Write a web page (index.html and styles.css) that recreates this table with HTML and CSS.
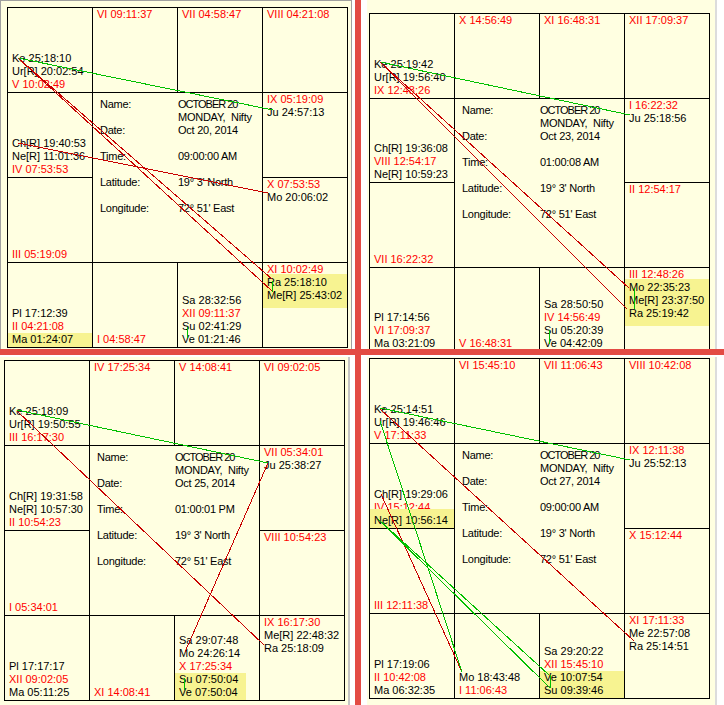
FILE: index.html
```html
<!DOCTYPE html>
<html>
<head>
<meta charset="utf-8">
<title>Charts</title>
<link rel="stylesheet" href="styles.css">
</head>
<body>
<div class="screen">

  <!-- Chart 1 -->
  <div class="quad q1">
    <div class="panel p1">
      <div class="chart">
        <div class="cell bot"><div>Ke 25:18:10</div><div>Ur[R] 20:02:54</div><div class="hs">V 10:02:49</div></div>
        <div class="cell top"><div class="hs">VI 09:11:37</div></div>
        <div class="cell top"><div class="hs">VII 04:58:47</div></div>
        <div class="cell top"><div class="hs">VIII 04:21:08</div></div>
        <div class="cell bot"><div>Ch[R] 19:40:53</div><div>Ne[R] 11:01:36</div><div class="hs">IV 07:53:53</div></div>
        <div class="cell center">
          <div>Name:</div><div><div class="month">OCTOBER 20</div><div class="day">MONDAY,  Nifty</div></div>
          <div>Date:</div><div>Oct 20, 2014</div>
          <div>Time:</div><div>09:00:00 AM</div>
          <div>Latitude:</div><div>19° 3' North</div>
          <div>Longitude:</div><div>72° 51' East</div>
        </div>
        <div class="cell top"><div class="hs">IX 05:19:09</div><div>Ju 24:57:13</div></div>
        <div class="cell bot"><div class="hs">III 05:19:09</div></div>
        <div class="cell top"><div class="hs">X 07:53:53</div><div>Mo 20:06:02</div></div>
        <div class="cell bot"><div>Pl 17:12:39</div><div class="hs">II 04:21:08</div><div class="hl hl-b"><div>Ma 01:24:07</div></div></div>
        <div class="cell bot"><div class="hs">I 04:58:47</div></div>
        <div class="cell bot"><div>Sa 28:32:56</div><div class="hs">XII 09:11:37</div><div>Su 02:41:29</div><div>Ve 01:21:46</div></div>
        <div class="cell top"><div class="hs">XI 10:02:49</div><div class="hl hl-t"><div>Ra 25:18:10</div><div>Me[R] 25:43:02</div></div></div>
        <svg class="aspects" width="341" height="341" viewBox="0 0 341 341">
          <line class="g" x1="11" y1="51" x2="266" y2="103"/>
          <line class="rd" x1="11" y1="51" x2="265" y2="272"/>
          <line class="rd" x1="12" y1="52" x2="265" y2="284"/>
          <line class="g" x1="265" y1="274" x2="265" y2="285"/>
          <line class="rd" x1="11" y1="136" x2="261" y2="186"/>
          <line class="g" x1="180" y1="320" x2="180" y2="331"/>
        </svg>
      </div>
    </div>
  </div>

  <div class="vbar"></div>

  <!-- Chart 2 -->
  <div class="quad q2">
    <div class="panel p2">
      <div class="chart chart-clip">
        <div class="cell bot"><div>Ke 25:19:42</div><div>Ur[R] 19:56:40</div><div class="hs">IX 12:48:26</div></div>
        <div class="cell top"><div class="hs">X 14:56:49</div></div>
        <div class="cell top"><div class="hs">XI 16:48:31</div></div>
        <div class="cell top"><div class="hs">XII 17:09:37</div></div>
        <div class="cell bot"><div>Ch[R] 19:36:08</div><div class="hs">VIII 12:54:17</div><div>Ne[R] 10:59:23</div></div>
        <div class="cell center">
          <div>Name:</div><div><div class="month">OCTOBER 20</div><div class="day">MONDAY,  Nifty</div></div>
          <div>Date:</div><div>Oct 23, 2014</div>
          <div>Time:</div><div>01:00:08 AM</div>
          <div>Latitude:</div><div>19° 3' North</div>
          <div>Longitude:</div><div>72° 51' East</div>
        </div>
        <div class="cell top"><div class="hs">I 16:22:32</div><div>Ju 25:18:56</div></div>
        <div class="cell bot"><div class="hs">VII 16:22:32</div></div>
        <div class="cell top"><div class="hs">II 12:54:17</div></div>
        <div class="cell bot last"><div>Pl 17:14:56</div><div class="hs">VI 17:09:37</div><div>Ma 03:21:09</div></div>
        <div class="cell bot last"><div class="hs">V 16:48:31</div></div>
        <div class="cell bot last"><div>Sa 28:50:50</div><div class="hs">IV 14:56:49</div><div>Su 05:20:39</div><div>Ve 04:42:09</div></div>
        <div class="cell top last"><div class="hs">III 12:48:26</div><div class="hl hl-t"><div>Mo 22:35:23</div><div>Me[R] 23:37:50</div><div>Ra 25:19:42</div></div></div>
        <svg class="aspects" width="341" height="341" viewBox="0 0 341 341">
          <line class="g" x1="11" y1="49" x2="261" y2="102"/>
          <line class="rd" x1="11" y1="49" x2="260" y2="275"/>
          <line class="rd" x1="12" y1="50" x2="258" y2="296"/>
          <line class="g" x1="265" y1="275" x2="265" y2="296"/>
          <line class="g" x1="180" y1="317" x2="180" y2="331"/>
        </svg>
      </div>
    </div>
  </div>

  <div class="hbar"></div>

  <!-- Chart 3 -->
  <div class="quad q3">
    <div class="panel p3">
      <div class="chart">
        <div class="cell bot"><div>Ke 25:18:09</div><div>Ur[R] 19:50:55</div><div class="hs">III 16:17:30</div></div>
        <div class="cell top"><div class="hs">IV 17:25:34</div></div>
        <div class="cell top"><div class="hs">V 14:08:41</div></div>
        <div class="cell top"><div class="hs">VI 09:02:05</div></div>
        <div class="cell bot"><div>Ch[R] 19:31:58</div><div>Ne[R] 10:57:30</div><div class="hs">II 10:54:23</div></div>
        <div class="cell center">
          <div>Name:</div><div><div class="month">OCTOBER 20</div><div class="day">MONDAY,  Nifty</div></div>
          <div>Date:</div><div>Oct 25, 2014</div>
          <div>Time:</div><div>01:00:01 PM</div>
          <div>Latitude:</div><div>19° 3' North</div>
          <div>Longitude:</div><div>72° 51' East</div>
        </div>
        <div class="cell top"><div class="hs">VII 05:34:01</div><div>Ju 25:38:27</div></div>
        <div class="cell bot"><div class="hs">I 05:34:01</div></div>
        <div class="cell top"><div class="hs">VIII 10:54:23</div></div>
        <div class="cell bot"><div>Pl 17:17:17</div><div class="hs">XII 09:02:05</div><div>Ma 05:11:25</div></div>
        <div class="cell bot"><div class="hs">XI 14:08:41</div></div>
        <div class="cell bot"><div>Sa 29:07:48</div><div>Mo 24:26:14</div><div class="hs">X 17:25:34</div><div class="hl hl-b hl-short"><div>Su 07:50:04</div><div>Ve 07:50:04</div></div></div>
        <div class="cell top"><div class="hs">IX 16:17:30</div><div>Me[R] 22:48:32</div><div>Ra 25:18:09</div></div>
        <svg class="aspects" width="341" height="341" viewBox="0 0 341 341">
          <line class="g" x1="13" y1="50" x2="264" y2="103"/>
          <line class="rd" x1="13" y1="51" x2="260" y2="285"/>
          <line class="rd" x1="264" y1="103" x2="181" y2="292"/>
          <line class="g" x1="180" y1="318" x2="180" y2="330"/>
        </svg>
      </div>
    </div>
  </div>

  <!-- Chart 4 -->
  <div class="quad q4">
    <div class="panel p4">
      <div class="chart">
        <div class="cell bot"><div>Ke 25:14:51</div><div>Ur[R] 19:46:46</div><div class="hs">V 17:11:33</div></div>
        <div class="cell top"><div class="hs">VI 15:45:10</div></div>
        <div class="cell top"><div class="hs">VII 11:06:43</div></div>
        <div class="cell top"><div class="hs">VIII 10:42:08</div></div>
        <div class="cell bot"><div>Ch[R] 19:29:06</div><div class="hs">IV 15:12:44</div><div class="hl hl-b hl-up"><div>Ne[R] 10:56:14</div></div></div>
        <div class="cell center">
          <div>Name:</div><div><div class="month">OCTOBER 20</div><div class="day">MONDAY,  Nifty</div></div>
          <div>Date:</div><div>Oct 27, 2014</div>
          <div>Time:</div><div>09:00:00 AM</div>
          <div>Latitude:</div><div>19° 3' North</div>
          <div>Longitude:</div><div>72° 51' East</div>
        </div>
        <div class="cell top"><div class="hs">IX 12:11:38</div><div>Ju 25:52:13</div></div>
        <div class="cell bot"><div class="hs">III 12:11:38</div></div>
        <div class="cell top"><div class="hs">X 15:12:44</div></div>
        <div class="cell bot"><div>Pl 17:19:06</div><div class="hs">II 10:42:08</div><div>Ma 06:32:35</div></div>
        <div class="cell bot"><div>Mo 18:43:48</div><div class="hs">I 11:06:43</div></div>
        <div class="cell bot"><div>Sa 29:20:22</div><div class="hs">XII 15:45:10</div><div class="hl hl-b"><div>Ve 10:07:54</div><div>Su 09:39:46</div></div></div>
        <div class="cell top"><div class="hs">XI 17:11:33</div><div>Me 22:57:08</div><div>Ra 25:14:51</div></div>
        <svg class="aspects" width="341" height="341" viewBox="0 0 341 341">
          <line class="g" x1="11" y1="50" x2="261" y2="102"/>
          <line class="rd" x1="11" y1="51" x2="265" y2="283"/>
          <line class="rd" x1="12" y1="136" x2="93" y2="314"/>
          <line class="g" x1="11" y1="63" x2="93" y2="314"/>
          <line class="g" x1="9" y1="161" x2="180" y2="317"/>
          <line class="g" x1="9" y1="161" x2="181" y2="330"/>
          <line class="g" x1="181" y1="317" x2="181" y2="330"/>
        </svg>
      </div>
    </div>
  </div>

</div>
</body>
</html>
```

FILE: styles.css
```css
html, body {
  margin: 0;
  padding: 0;
  background: #ffffff;
}

body {
  font-family: "Liberation Sans", Arial, sans-serif;
  font-size: 11px;
  line-height: 13px;
  color: #000000;
}

.screen {
  display: grid;
  grid-template-columns: 355px 6px 363px;
  grid-template-rows: 349px 6px 350px;
  width: 724px;
  height: 705px;
  overflow: hidden;
}

.vbar {
  grid-column: 2;
  grid-row: 1 / 4;
  background: #e34b44;
}

.hbar {
  grid-column: 1 / 4;
  grid-row: 2;
  background: #e34b44;
}

.q1 { grid-column: 1; grid-row: 1; }
.q2 { grid-column: 3; grid-row: 1; }
.q3 { grid-column: 1; grid-row: 3; }
.q4 { grid-column: 3; grid-row: 3; }

.quad {
  display: flex;
  min-width: 0;
  min-height: 0;
  overflow: hidden;
}

.panel {
  background: #ffffe1;
  box-sizing: border-box;
  overflow: hidden;
}

.p1 {
  width: 352px;
  height: 349px;
  border-top: 1px solid #a0a0a0;
  border-left: 1px solid #a0a0a0;
  border-right: 1px solid #a0a0a0;
  padding: 6px 0 0 6px;
}

.p2 {
  width: 350px;
  height: 349px;
  margin-left: 6px;
  border-right: 2px solid #dcdcdc;
  padding: 13px 0 0 2px;
}

.p3 {
  width: 350px;
  height: 348px;
  margin-top: 2px;
  border-right: 2px solid #c4c4c4;
  padding: 3px 0 0 4px;
}

.p4 {
  width: 350px;
  height: 348px;
  margin-left: 6px;
  margin-top: 2px;
  border-right: 2px solid #dcdcdc;
  padding: 1px 0 0 2px;
}

.chart {
  position: relative;
  display: grid;
  grid-template-columns: repeat(4, 85px);
  grid-template-rows: repeat(4, 85px);
  border-left: 1px solid #000000;
  border-top: 1px solid #000000;
  width: max-content;
}

.chart-clip {
  grid-template-rows: 85px 84px 85px 82px;
}

.cell {
  box-sizing: border-box;
  border-right: 1px solid #000000;
  border-bottom: 1px solid #000000;
  display: flex;
  flex-direction: column;
  padding: 0 4px 1px 4px;
  white-space: nowrap;
  min-width: 0;
  min-height: 0;
}

.chart-clip .cell.last {
  border-bottom: 0;
  padding-bottom: 0;
}

.cell.top { justify-content: flex-start; }
.cell.bot { justify-content: flex-end; }

.hs { color: #ff0000; }

.hl {
  background: #f7f391;
  margin: 0 -4px;
  padding: 0 4px;
}

.hl-t {
  margin-top: -2px;
  padding-top: 2px;
  padding-bottom: 6px;
}

.hl-b {
  margin-bottom: -1px;
  padding-bottom: 1px;
}

.hl-up {
  margin-top: -5px;
  padding-top: 5px;
}

.hl-short {
  align-self: flex-start;
  width: 71px;
  box-sizing: border-box;
}

.cell.center {
  grid-column: span 2;
  grid-row: span 2;
  display: grid;
  grid-template-columns: 78px auto;
  grid-auto-rows: 26px;
  align-content: start;
  padding: 5px 0 0 7px;
  letter-spacing: -0.25px;
}

.month { letter-spacing: -1px; }
.day { white-space: pre; }

.aspects {
  position: absolute;
  top: -1px;
  left: -1px;
  overflow: visible;
  pointer-events: none;
}

.aspects line {
  stroke-width: 1;
  shape-rendering: crispEdges;
}

.aspects .g { stroke: #00c000; }
.aspects .rd { stroke: #c80000; }
```
